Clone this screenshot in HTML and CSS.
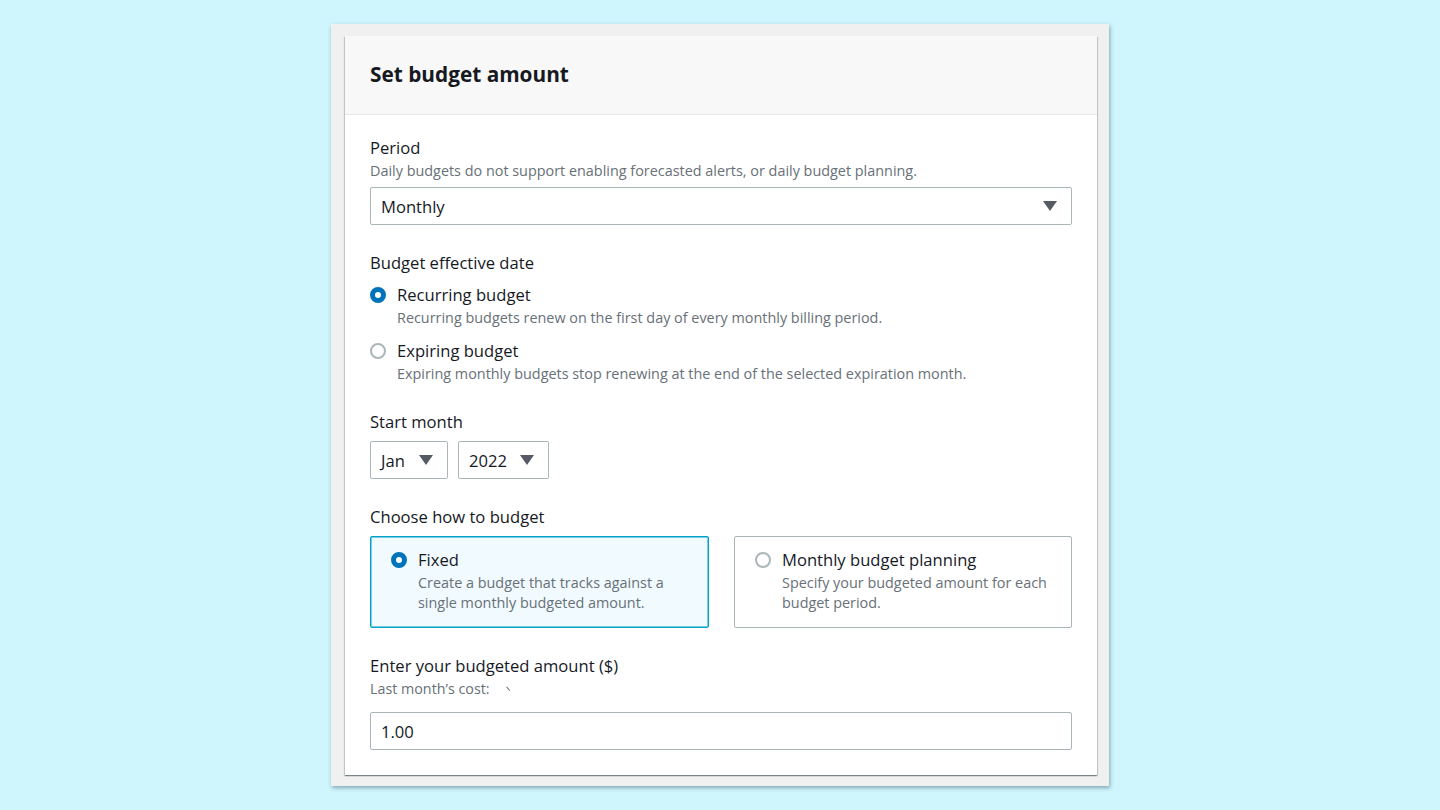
FILE: index.html
```html
<!DOCTYPE html>
<html lang="en">
<head>
<meta charset="utf-8">
<title>Set budget amount</title>
<link rel="stylesheet" href="styles.css">
</head>
<body>
<div class="stage">
  <div class="frame">
    <section class="card">
      <header class="card-header">
        <h2 class="card-title">Set budget amount</h2>
      </header>
      <div class="card-body">
        <div class="field">
          <div class="label">Period</div>
          <div class="desc">Daily budgets do not support enabling forecasted alerts, or daily budget planning.</div>
          <div class="select select-wide">
            <span class="select-value">Monthly</span>
            <span class="caret"></span>
          </div>
        </div>

        <div class="field">
          <div class="label">Budget effective date</div>
          <div class="radio-group">
            <div class="radio-row">
              <span class="radio checked"></span>
              <div class="radio-text">
                <div class="radio-label">Recurring budget</div>
                <div class="desc">Recurring budgets renew on the first day of every monthly billing period.</div>
              </div>
            </div>
            <div class="radio-row">
              <span class="radio"></span>
              <div class="radio-text">
                <div class="radio-label">Expiring budget</div>
                <div class="desc">Expiring monthly budgets stop renewing at the end of the selected expiration month.</div>
              </div>
            </div>
          </div>
        </div>

        <div class="field field-tight">
          <div class="label">Start month</div>
          <div class="select-row">
            <div class="select select-month">
              <span class="select-value">Jan</span>
              <span class="caret"></span>
            </div>
            <div class="select select-year">
              <span class="select-value">2022</span>
              <span class="caret"></span>
            </div>
          </div>
        </div>

        <div class="field">
          <div class="label">Choose how to budget</div>
          <div class="tiles">
            <div class="tile selected">
              <span class="radio checked"></span>
              <div class="radio-text">
                <div class="radio-label">Fixed</div>
                <div class="desc tile-desc">Create a budget that tracks against a single monthly budgeted amount.</div>
              </div>
            </div>
            <div class="tile">
              <span class="radio"></span>
              <div class="radio-text">
                <div class="radio-label">Monthly budget planning</div>
                <div class="desc tile-desc">Specify your budgeted amount for each budget period.</div>
              </div>
            </div>
          </div>
        </div>

        <div class="field">
          <div class="label">Enter your budgeted amount ($)</div>
          <div class="desc small">Last month’s cost: <span class="tick"></span></div>
          <div class="input">1.00</div>
        </div>
      </div>
    </section>
  </div>
</div>
</body>
</html>
```
FILE: styles.css
```css
* { box-sizing: border-box; }
html, body { margin: 0; padding: 0; }
body {
  background: #cff5fd;
  font-family: "Open Sans", "Noto Sans", sans-serif;
  color: #16191f;
  width: 1440px;
  height: 810px;
  overflow: hidden;
}
.stage {
  display: flex;
  justify-content: center;
  padding-top: 24px;
}
.frame {
  width: 778px;
  height: 762px;
  background: #eff0ef;
  padding: 12px 12px 0 14px;
  box-shadow: 1px 2px 4px rgba(40, 80, 90, 0.45);
}
.card {
  background: #fff;
  height: 739px;
  box-shadow: 0 1px 1px rgba(0, 28, 36, 0.3), 1px 1px 1px rgba(0, 28, 36, 0.15), -1px 1px 1px rgba(0, 28, 36, 0.15);
}
.card-header {
  background: #f7f8f7;
  height: 79px;
  border-bottom: 1px solid #e6e8e8;
  padding: 0 25px 2px 25px;
  display: flex;
  align-items: center;
}
.card-title {
  margin: 0;
  font-size: 20.8px;
  font-weight: 700;
  color: #16191f;
}
.card-body {
  padding: 21px 25px 0 25px;
}
.field { margin-bottom: 26px; }
.field-tight { margin-top: -1px; }
.label {
  font-size: 16.6px;
  line-height: 24px;
  color: #16191f;
}
.desc {
  font-size: 14.4px;
  line-height: 22px;
  color: #687078;
}
.desc.small {
  font-size: 14.3px;
  line-height: 22px;
  display: flex;
  align-items: center;
}
.tick {
  display: inline-block;
  width: 3px;
  height: 5px;
  margin-left: 16px;
  border-right: 1.5px solid #687078;
  transform: rotate(-40deg);
}
.select, .input {
  height: 38px;
  border: 1px solid #aab7b8;
  border-radius: 2px;
  background: #fff;
  display: flex;
  align-items: center;
  font-size: 16.6px;
  color: #16191f;
  padding: 0 14px 0 10px;
}
.select-wide { width: 702px; margin-top: 5px; justify-content: space-between; }
.select-row { display: flex; gap: 10px; margin-top: 7px; }
.select-month { width: 78px; justify-content: space-between; }
.select-year { width: 91px; justify-content: space-between; }
.caret {
  width: 0; height: 0;
  border-left: 7px solid transparent;
  border-right: 7px solid transparent;
  border-top: 10px solid #545b64;
}
.radio-group { display: flex; flex-direction: column; gap: 10px; margin-top: 8px; }
.radio-row { display: flex; gap: 11px; align-items: flex-start; }
.radio {
  flex: none;
  width: 16px;
  height: 16px;
  border-radius: 50%;
  border: 2px solid #aab7b8;
  background: #fff;
  margin-top: 4px;
}
.radio.checked { border: 5px solid #0073bb; }
.radio-label { font-size: 16.6px; line-height: 24px; color: #16191f; }
.tiles {
  display: grid;
  grid-template-columns: 339px 338px;
  gap: 25px;
  margin-top: 7px;
}
.tile {
  height: 92px;
  border: 1px solid #aab7b8;
  border-radius: 2px;
  padding: 11px 20px 0 20px;
  display: flex;
  gap: 11px;
  align-items: flex-start;
}
.tile.selected {
  border: 1px solid #00a1c9;
  background: #f1faff;
  box-shadow: inset 0 0 0 0.5px #00a1c9;
}
.tile-desc { line-height: 20px; margin-top: 1px; }
.input { width: 702px; margin-top: 12px; }
```
